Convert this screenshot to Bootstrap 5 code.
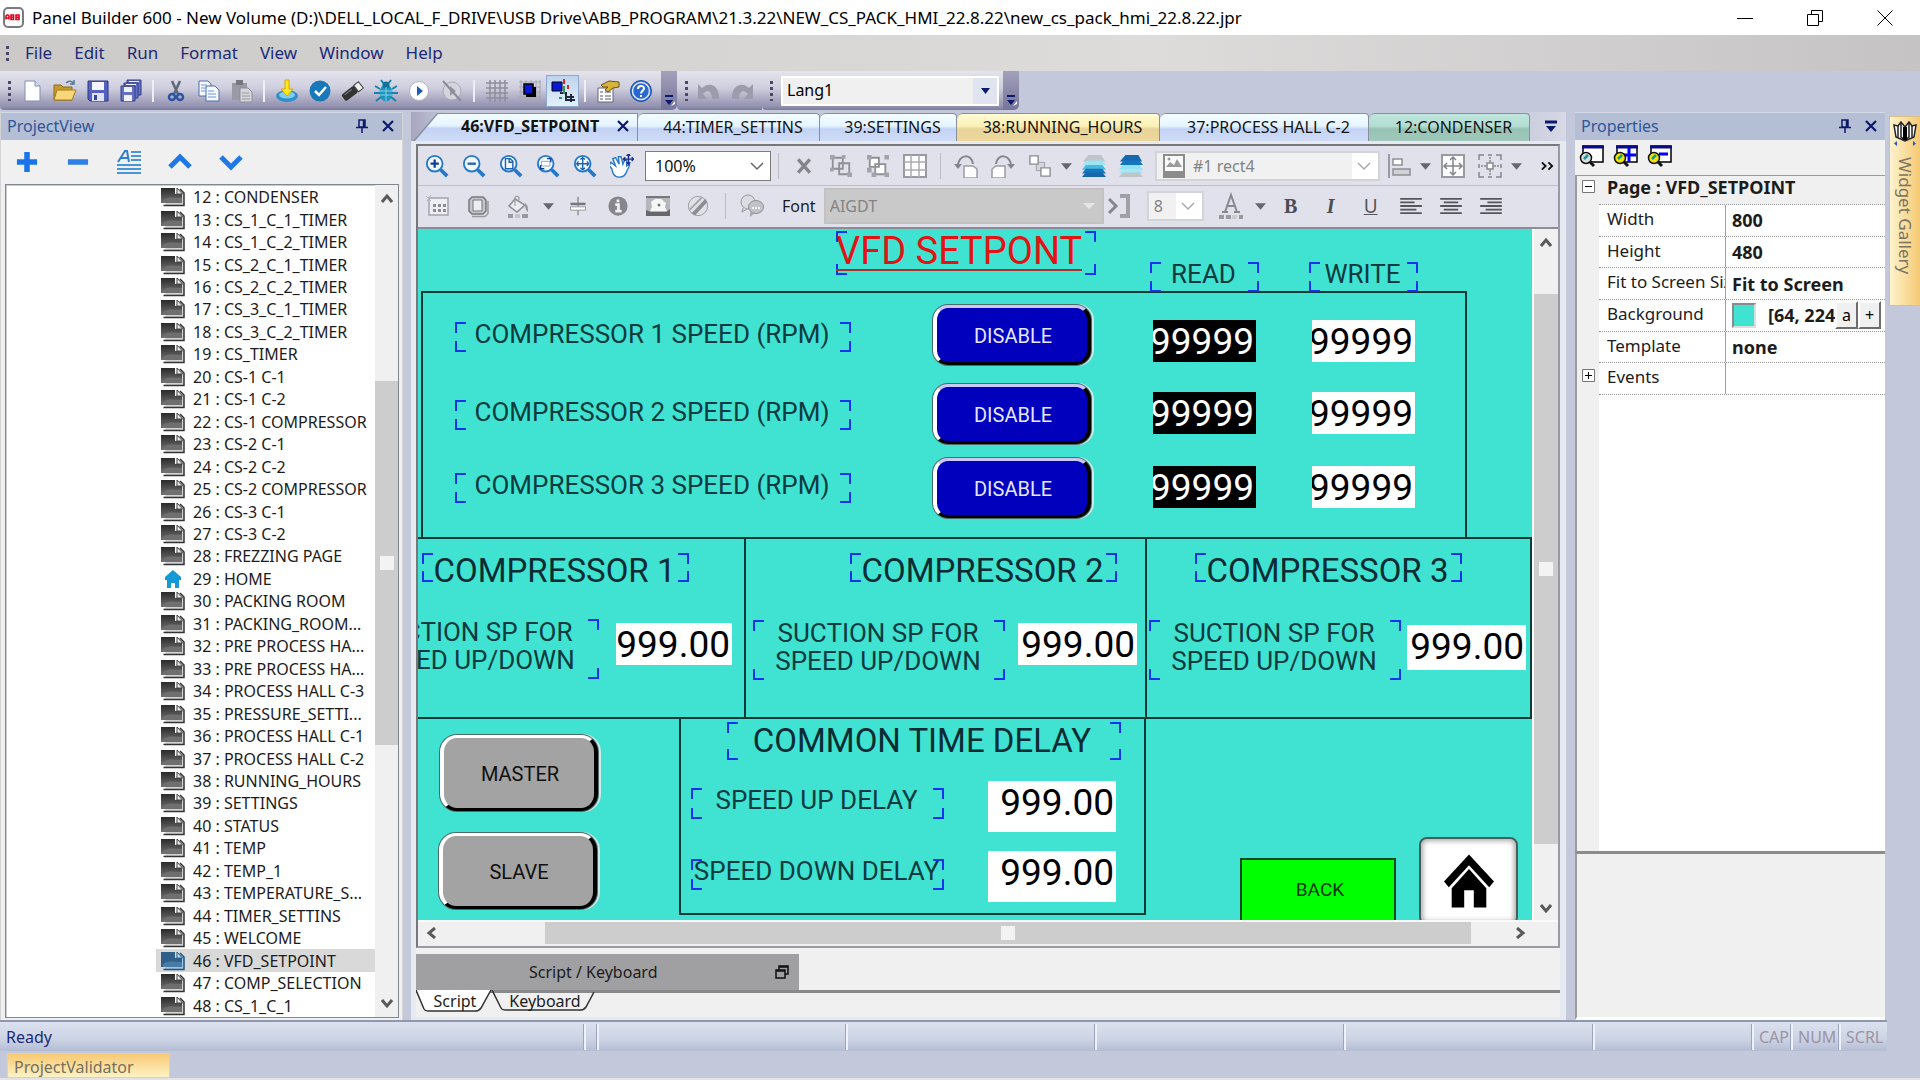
<!DOCTYPE html>
<html lang="en">
<head>
<meta charset="utf-8">
<meta name="viewport" content="width=device-width, initial-scale=1">
<title>Panel Builder 600</title>
<link href="https://cdn.jsdelivr.net/npm/bootstrap@5.3.0/dist/css/bootstrap.min.css" rel="stylesheet">
<style>
:root{--ui:"Noto Sans","Open Sans",sans-serif;--hmi:Roboto,"Liberation Sans",sans-serif;--chrome:#c3c9da;--navy:#1b2a78;--teal:#40e2d1}
body{font-family:var(--ui);font-size:16px;line-height:20px;background:var(--chrome);color:#1c1c1c}
svg{display:block;flex:none}
.ico{width:24px;height:24px}
button{font-family:inherit}
.plain{background:none;border:0;padding:0;border-radius:0;color:inherit;display:flex;align-items:center;justify-content:center;flex:none}
.grow0{flex:1 1 0;min-width:0;min-height:0}
/* title bar */
.titlebar{height:35px;background:#fff;color:#000;font-size:17px;padding-left:3px;flex:none}
.wbtn{width:70px;height:35px}
.menubar{height:36px;padding-left:6px;gap:22px;background:linear-gradient(90deg,#cbcac9,#dedcdb 60%,#c5c3c4);flex:none}
.menubar a{color:var(--navy);text-decoration:none;font-size:17px}
.grip{width:3px;height:20px;background:repeating-linear-gradient(#4a4a66 0 3px,transparent 3px 6px);flex:none}
.menubar .grip{height:15px;margin-right:-6px}
/* main tool strip */
.strip{height:41px;flex:none}
.tbar{height:39px;background:linear-gradient(#e4e4ee,#cdcddd 45%,#918fae 92%,#7d7b9b);border-radius:0 0 0 4px}
.tbar .plain{width:33px;height:32px}
.tbar .pressed{background:linear-gradient(#bcd3ee,#e4f0fc);box-shadow:inset 0 0 0 1px #8fa9cc}
.vsep{width:12px;height:22px;flex:none;background:linear-gradient(#eeeef6,#eeeef6) center/2px 100% no-repeat}
.cap{width:16px;height:39px;background:linear-gradient(#a3a1ba,#76749a);border-radius:0 0 5px 0;padding-bottom:3px;flex:none}
.langsel{width:218px;height:30px;border-radius:0;border:2px solid #fff;font-size:16px;padding:0 28px 2px 4px;color:#000;line-height:20px;
 background:#f0f0f0 url("data:image/svg+xml,%3Csvg xmlns='http://www.w3.org/2000/svg' width='24' height='26'%3E%3Cpath fill='%23e0e4f1' d='M0 0h24v26H0z'/%3E%3Cpath fill='%230d1a6b' d='M8 10h9l-4.500 6z'/%3E%3C/svg%3E") right center/24px 26px no-repeat}
/* dock panels */
.phead{height:28px;background:#b4bed5;color:#2f5699;font-size:16px;padding:0 7px 2px 6px;border-top:1px solid #d3d9e8;flex:none}
.project{width:403px;background:#f0f0f0;flex:none;border-left:1px solid #d4d4d4;border-right:1px solid #d4d4d4;padding-bottom:2px}
.ptools{height:44px;flex:none}
.ptools .plain{width:51px;height:44px}
.treebox{margin:0 3px 0 4px;border:1px solid #828790;box-shadow:inset 1px 1px 0 #c9cbd0;background:#fff}
.tree{padding:1px 0 0 150px;margin:0;list-style:none;min-width:0;font-size:16px}
.tree li{flex:1 1 0;min-height:0;padding-left:5px;gap:8px}
.tree li.cur{background:#d9d9d9}
.vbar{width:23px;background:#f0f0f0;flex:none;padding:8px 0}
.vthumb{background:#cdcdcd}
.nub{width:14px;height:14px;background:#f3f3f3}
/* editor */
.tabs{height:29px;padding-left:2px;background:linear-gradient(90deg,#a7a5bf,#c3c9da 3%,#c3c9da 95%,#d8d8e6);flex:none}
.tabs .plain{height:28px;font-size:16px;padding:0 0 2px 9px;color:#141414;background:linear-gradient(#f3fdff,#e6f4ff 45%,#c2d3f4 55%,#cfdcf7);border:1px solid #8a8f9f;border-width:1px 1px 0 0;border-radius:6px 4px 0 0}
.tabs .first{width:225px;font-weight:700;border:0;border-radius:0;background:#8a8f9f;clip-path:polygon(0 100%,24px 0,100% 0,100% 100%);padding-left:48px;justify-content:flex-start;position:relative;gap:17px;z-index:0}
.tabs .first::before{content:"";position:absolute;inset:0;z-index:-1;background:linear-gradient(#f3fdff,#e6f4ff 45%,#c2d3f4 55%,#cfdcf7);clip-path:polygon(2px 100%,25px 1px,224px 1px,224px 100%)}
.tabs .w2{width:182px}.tabs .w3{width:137px}.tabs .w4{width:203px}.tabs .w5{width:209px}.tabs .w6{width:161px}
.tabs .amber{background:linear-gradient(#fefbd5,#fbf0b4 45%,#e8d49a 55%,#ecd69c)}
.tabs .mint{background:linear-gradient(#bfe6dd,#b4ddd2 45%,#97c3b4 55%,#a0c8bb)}
.frame{border:1px solid #e7e9f0;border-width:3px 6px 3px 5px;background:#f0f0f0}
.sheet{border:2px solid #77777c;border-right-color:#9a9aa6;border-bottom-color:#9a9aa6}
.ebar{background:#e1e1eb;flex:none}
.e1{height:40px;border-bottom:1px solid #bdbdc9}.e1 .plain{width:37px;height:34px}
.e2{height:43px;border-bottom:2px solid #8d8d98;padding-bottom:2px}.e2 .plain{width:40px;height:34px}
.ebar .plain.caret{width:17px}.e2 .plain.caret{width:20px}.e2 .plain.brkt{width:33px}
.esep{width:14px;height:26px;flex:none;background:linear-gradient(#bcbcc8,#bcbcc8) center/1px 100% no-repeat}
.serif{font-family:"Liberation Serif",serif;font-size:20px;font-weight:700;color:#4c4c52}
.uline{font-size:19px;color:#55555b;text-decoration:underline}
.combo{border-radius:0;border:1px solid #7c7c7c;height:30px;padding:0 24px 0 9px;font-size:16px;line-height:20px;flex:none;color:#111;
 background:#fff url("data:image/svg+xml,%3Csvg xmlns='http://www.w3.org/2000/svg' width='14' height='10'%3E%3Cpath fill='none' stroke='%23666' stroke-width='1.500' d='M1 2l6 6 6-6'/%3E%3C/svg%3E") right 6px center/14px 10px no-repeat}
.combo.dim{color:#838383;border:2px solid #d3d3da;background-color:#f1f1f1;background-image:url("data:image/svg+xml,%3Csvg xmlns='http://www.w3.org/2000/svg' width='26' height='28'%3E%3Cpath fill='%23fff' d='M0 0h26v28H0z'/%3E%3Cpath fill='none' stroke='%23aaa' stroke-width='1.500' d='M6 11l6 6 6-6'/%3E%3C/svg%3E");background-size:26px 28px;background-position:right 0 center}
.combo.zoomsel{width:126px;margin-left:5px}.combo.objsel{width:225px;margin-left:6px;padding-left:36px}.combo.sizesel{width:57px;margin-left:10px;margin-right:7px;padding-left:5px;padding-right:20px}
.combo.fontsel{width:280px;height:36px;border-color:#c2c2c2;background-color:#c9c9c9;padding-left:4px;background-size:14px 10px;background-position:right 6px center;
 background-image:url("data:image/svg+xml,%3Csvg xmlns='http://www.w3.org/2000/svg' width='14' height='10'%3E%3Cpath fill='%23e6e6e6' d='M1 2h12l-6 6z'/%3E%3C/svg%3E")}
.flab{margin:0 8px 0 6px}
.objwrap{position:relative}.objwrap svg{position:absolute;left:13px;top:3px}
.stage{position:relative;overflow:hidden;background:var(--teal);font-family:var(--hmi);color:#0e3b40}
.evbar{width:26px;background:#f0f0f0;border-left:2px solid #fafafa;flex:none;padding:8px 0 6px}
.ehbar{height:26px;background:#f0f0f0;border-top:2px solid #fafafa;flex:none;padding:0 32px 2px 8px}
/* shapes placed on the HMI page */
.stage>*{position:absolute}
.box{border:2px solid #083a38}
.tagl{--c:#1533ee;--h:11px;display:flex;align-items:center;justify-content:center;text-align:center;white-space:nowrap;font-size:26px;line-height:28px;padding:0 2px 6px 0;
 background:
 linear-gradient(var(--c),var(--c)) 0 0/11px 2px,linear-gradient(var(--c),var(--c)) 0 0/2px var(--h),
 linear-gradient(var(--c),var(--c)) 100% 0/11px 2px,linear-gradient(var(--c),var(--c)) 100% 0/2px var(--h),
 linear-gradient(var(--c),var(--c)) 0 100%/11px 2px,linear-gradient(var(--c),var(--c)) 0 100%/2px var(--h),
 linear-gradient(var(--c),var(--c)) 100% 100%/11px 2px,linear-gradient(var(--c),var(--c)) 100% 100%/2px var(--h);background-repeat:no-repeat}
.tagl.big{font-size:33px;color:#0b2c33;padding:6px 2px 0 0}
.tagl.title{font-size:38px;color:#e01414;padding:0 14px 2px 0;justify-content:flex-start}
.tagl.title span{border-bottom:2px solid #a8322e;line-height:36px}
.num{overflow:hidden;display:flex;justify-content:flex-end;background:#fff}
.num input{width:130px;flex:none;border:0;padding:0 2px 0 0;background:none;text-align:right;font:37px/44px var(--hmi);color:#000;height:44px}
.num.blk{background:#000}.num.blk input{color:#fff}
.key{border:4px solid;border-color:#c9c9f4 #000 #000 #fff;border-top-width:3px;border-bottom-width:3px;border-radius:15px;box-shadow:0 0 0 1px #4c6a6c,2px 0 0 1px #cfe9e6;background:#0000bd;color:#e6e6ff;font-family:var(--hmi);font-size:20px;line-height:22px;padding:2px 0 0 2px;width:158px;height:60px}
.key.grey{background:#a3a3a3;color:#101010;border-top-color:#fff;height:76px;border-radius:17px}
.key.go{background:#0f0;color:#063306;border:2px solid #0a4a20;border-radius:0;box-shadow:none;width:156px;height:64px;font-size:19px;padding:0 0 0 4px}
.key.home{background:#fff;border:2px solid #4a5c5c;border-radius:8px;box-shadow:inset 0 0 5px 2px #aaa;width:99px;height:88px;padding:0}
#tTitle{left:418px;top:2px;width:260px;height:44px}
#tRead{left:732px;top:33px;width:109px;height:30px}#tWrite{left:891px;top:33px;width:109px;height:30px}
#bTop{left:3px;top:62px;width:1046px;height:248px}
#bC1{left:-60px;top:308px;width:388px;height:182px}#bC2{left:326px;top:308px;width:403px;height:182px}#bC3{left:727px;top:308px;width:387px;height:182px}#bDelay{left:261px;top:488px;width:467px;height:198px}
.rowlab{left:37px;width:396px;height:30px}.r1{top:93px}.r2{top:171px}.r3{top:244px}
.kd{left:515px}.k1{top:76px}.k2{top:155px}.k3{top:229px}
.nr{left:735px;width:103px;height:42px}.nw{left:894px;width:103px;height:42px}.n1{top:91px}.n2{top:163px}.n3{top:237px}
.cap1{left:4px}.cap2{left:432px}.cap3{left:777px}.ct{top:324px;width:267px;height:29px}
.sx{width:252px;height:60px}.s1{left:-71px;top:390px}.s2{left:335px;top:391px}.s3{left:731px;top:391px}
.v1{left:198px;top:394px;width:116px;height:42px}.v2{left:600px;top:394px;width:119px;height:42px}.v3{left:989px;top:396px;width:119px;height:45px}
#tDelay{left:309px;top:493px;width:394px;height:38px;padding:0 4px 1px 0}
.dl{left:273px;width:253px;height:31px;padding-bottom:7px}.d1{top:559px}.d2{top:630px}
.dv{left:570px;width:128px;height:51px}.d1v{top:552px}.d2v{top:622px}
#kM{left:22px;top:506px}#kS{left:21px;top:604px}#kB{left:822px;top:629px}#kH{left:1001px;top:608px}
/* script drawer */
.drawer{height:36px;width:383px;background:#a09fa2;margin-top:6px;padding:0 10px 0 113px;flex:none}
.sheets{height:27px;border-top:3px solid #89888a;flex:none}
.sheets .plain{height:22px;margin-top:-3px;padding-left:2px;position:relative;z-index:0}
.sheets .t1{width:76px}.sheets .t2{width:104px}
.sheets svg{position:absolute;inset:0;width:100%;height:100%;z-index:-1}
/* properties */
.props{width:310px;margin-left:9px;background:#f0f0f0;flex:none}
.qtools{height:35px;padding-bottom:4px;flex:none}.qtools .plain{width:34px;height:30px}
.grid{border-top:1px solid #9b9b9b;border-left:2px solid #9b9b9b;font-size:17px;line-height:20px}
.gut{width:22px;flex:none;background:#f0f0f0;gap:176px;padding-top:4px}
.gcell{border-bottom:1px dotted #9a9a9a;white-space:nowrap;overflow:hidden}
.gtitle{height:29px;background:#f0f0f0;font-weight:700;font-size:18px;padding:1px 0 0 8px}
.grows{height:190px}.grows .gcell{flex:1 1 0;display:flex}
.gk{width:127px;padding:0 0 3px 8px;border-right:1px solid #a0a0a0;flex:none;display:flex;align-items:center;overflow:hidden}
.gv{font-weight:700;font-size:18px;padding-left:6px;min-width:0;display:flex;align-items:center;flex:1 1 0;overflow:hidden}
.swatch{width:24px;height:25px;background:var(--teal);border:2px solid #8a8a8a;border-right-color:#ddd;border-bottom-color:#ddd;flex:none}
.gbtn{width:23px;height:28px;background:#f0f0f0;border:2px solid;border-color:#fff #6d6d6d #6d6d6d #fff;padding:0;line-height:18px;font-size:16px;flex:none}
.desc{height:169px;border-top:3px solid #8c8c8c;border-left:2px solid #9b9b9b;border-bottom:3px solid #fff;flex:none}
.rail{width:35px;flex:none;padding:4px 0 0 4px}
.rail .plain{width:31px;height:190px;background:linear-gradient(90deg,#fdf3cd,#f6c973);border:1px solid #d8c189;border-right:0;flex-direction:column;justify-content:flex-start;gap:10px;color:#79735f;padding-top:4px}
.rail span{writing-mode:vertical-rl;font-size:17px}
/* status */
.status{height:31px;border-top:2px solid #8f98b0;background:linear-gradient(#dbe1ee,#ccd3e4 60%,#b4bdd4);color:var(--navy);margin-right:33px;padding-left:6px;flex:none}
.status span+span{border-left:2px solid #eef1f8;box-shadow:-1px 0 0 #9aa5c0;padding-left:5px;height:26px;color:#9c93a4;display:flex;align-items:center;flex:none;width:249px}
.status span+span.sa{width:13px}.status span+span.sb{width:159px}.status span+span.sc{width:39px}.status span+span.sd{width:48px}
.dock{height:29px;padding:2px 0 0 7px;border-bottom:2px solid #e3e3e6;flex:none}
.dock .plain{width:163px;height:25px;background:linear-gradient(#f8c973,#fdf2c4);border:1px solid #e3d3a0;color:#77705c;justify-content:flex-start;padding:2px 0 0 6px}
</style>
</head>
<body class="vh-100 d-flex flex-column overflow-hidden">

<svg width="0" height="0" class="position-absolute" aria-hidden="true">
<defs>
<linearGradient id="gd" x1="0" y1="0" x2="0" y2="1"><stop offset="0" stop-color="#2a2a2a"/><stop offset="1" stop-color="#707070"/></linearGradient>
<symbol id="page" viewBox="0 0 24 20"><path d="M2.500 18.500H23V6l-4-4" fill="#d2d2d2" stroke="#333" stroke-width="1.500"/><path d="M0 1h14v6h7v9H0z" fill="url(#gd)"/><path d="M2 13c6-4 12-2 19-2v5H2z" fill="#6f6f6f"/><path d="M16 1l5.500 6H16z" fill="#eee" stroke="#444"/></symbol>
<symbol id="page-b" viewBox="0 0 24 20"><path d="M2.500 18.500H23V6l-4-4" fill="#9ec4e4" stroke="#1d5480" stroke-width="1.500"/><path d="M0 1h14v6h7v9H0z" fill="#2d5f8a"/><path d="M2 13c6-4 12-2 19-2v5H2z" fill="#4a7ba5"/><path d="M16 1l5.500 6H16z" fill="#bcd9f1" stroke="#22618f"/></symbol>
<symbol id="home" viewBox="0 0 24 20"><path d="M12 1l8 7v3h-2v8h-4v-5h-4v5H6v-8H4V8z" fill="#129ad6"/></symbol>
<symbol id="new" viewBox="0 0 24 24"><path d="M5 2h10l5 5v15H5z" fill="#fff" stroke="#7f8fb5"/><path d="M15 2v5h5" fill="#d8e0f0" stroke="#7f8fb5"/></symbol>
<symbol id="open" viewBox="0 0 24 24"><path d="M1 6h7l2 2h9v13H1z" fill="#c79a2c" stroke="#8f6a14"/><path d="M4 11h19l-4 10H1z" fill="#f6d779" stroke="#a37b1c"/><path d="M13 4c3-3 6-2 8 1M21 1v4h-4" stroke="#56799a" stroke-width="1.500" fill="none"/></symbol>
<symbol id="save" viewBox="0 0 24 24"><path d="M2 2h20v20H4l-2-2z" fill="#5561be" stroke="#2c357f"/><path d="M6 3h12v8H6z" fill="#f4f5fc"/><path d="M6 14h12v8H6z" fill="#dfe2f4"/><path d="M8 16h3v5H8z" fill="#39459d"/></symbol>
<symbol id="saveall" viewBox="0 0 24 24"><g fill="#6470c2" stroke="#333c88"><path d="M8 1h14v15H8z"/><path d="M5 4h14v15H5z"/><path d="M2 7h14v15H2z"/></g><path d="M10 2h10v1H10zM7 5h10v1H7zM5 8h8v5H5zM5 16h8v6H5z" fill="#f0f1fb"/></symbol>
<symbol id="cut" viewBox="0 0 24 24"><path d="M8 2l6 13M16 2l-6 13" stroke="#5f6678" stroke-width="2.500"/><g fill="none" stroke="#2b54a3" stroke-width="2.500"><circle cx="8" cy="18" r="3"/><circle cx="16" cy="18" r="3"/></g></symbol>
<symbol id="copy" viewBox="0 0 24 24"><g fill="#f5f9ff" stroke="#4a6eb0"><path d="M2 2h9l3 3v12H2z"/><path d="M9 7h9l4 4v11H9z"/></g><path d="M4 6h6M4 9h5M4 12h5M11 12h6M11 15h8M11 18h8" stroke="#6d9ad8"/></symbol>
<symbol id="paste" viewBox="0 0 24 24"><path d="M2 4h15v17H2z" fill="#9a9aa6"/><path d="M6 1h7v5H6z" fill="#77777f"/><path d="M10 9h8l4 4v10H10z" fill="#d5d5dc" stroke="#8c8c97"/><path d="M12 14h7M12 17h8M12 20h8" stroke="#98989f"/></symbol>
<symbol id="down" viewBox="0 0 24 24"><ellipse cx="12" cy="17" rx="11" ry="6" fill="#2f8fc9"/><ellipse cx="12" cy="16" rx="8" ry="3.500" fill="#7fcdf0"/><path d="M10 1h4v9h4l-6 7-6-7h4z" fill="#ffe81c" stroke="#d8a800"/></symbol>
<symbol id="ok" viewBox="0 0 24 24"><circle cx="12" cy="12" r="10.500" fill="#1878b8"/><path d="M7 12l4 4 7-8" stroke="#fff" stroke-width="2.500" fill="none"/></symbol>
<symbol id="usb" viewBox="0 0 24 24"><g transform="rotate(-38 12 12)"><rect x="0" y="8" width="16" height="8" rx="2" fill="#333"/><path d="M16 8h6v8h-6z" fill="#eee" stroke="#444"/><path d="M3 10h9" stroke="#888"/></g></symbol>
<symbol id="bug" viewBox="0 0 24 24"><path d="M7 1l3 4M17 1l-3 4M1 7l5 3M23 7l-5 3M0 14h6M24 14h-6M2 22l5-4M22 22l-5-4" stroke="#1583ab" stroke-width="2"/><ellipse cx="12" cy="14" rx="6.500" ry="8.500" fill="#1d94bd"/><circle cx="12" cy="6" r="3.500" fill="#137198"/><path d="M12 8v14M6 12h12M6 16h12" stroke="#8bd2e8"/></symbol>
<symbol id="play" viewBox="0 0 24 24"><circle cx="12" cy="12" r="9.500" fill="#fdfdff" stroke="#b4b4c2"/><path d="M10 7l6 5-6 5z" fill="#1c5cb8"/></symbol>
<symbol id="stop" viewBox="0 0 24 24"><circle cx="12" cy="12" r="9" fill="#d4d4dc" stroke="#a9a9b5"/><path d="M10 7l6 5-6 5z" fill="#9a9aa6"/><path d="M3 2l18 20" stroke="#8b8b97" stroke-width="2"/></symbol>
<symbol id="grid9" viewBox="0 0 24 24"><path d="M5 1v22M10 1v22M15 1v22M20 1v22M1 4h22M1 9h22M1 14h22M1 19h22" stroke="#8e8e9c" stroke-width="1.500"/></symbol>
<symbol id="snap" viewBox="0 0 24 24"><path d="M3 1v22M8 1v22M13 1v22M18 1v22M22 1v22M1 3h22M1 8h22M1 13h22M1 18h22M1 22h22" stroke="#a5a5b3"/><path d="M8 8h10v10H8z" fill="#000"/><path d="M6 5h9v10H6z" fill="#0a18d8" stroke="#000" stroke-width="1.500"/></symbol>
<symbol id="guide" viewBox="0 0 24 24"><path d="M1 3h10v9H1z" fill="#0a18d8" stroke="#000"/><path d="M9 14h6v7h9M15 18h8M20 15v8" stroke="#1c2a3a" stroke-width="2" fill="none"/><path d="M13 0v5M17 6v4" stroke="#d22" stroke-width="2"/><path d="M13 7v8M8 19h3" stroke="#2a9a5a" stroke-width="2"/></symbol>
<symbol id="propsico" viewBox="0 0 24 24"><path d="M2 9h15v14H2z" fill="#fff" stroke="#667"/><path d="M4 13h3M9 13h6M4 17h3M9 17h6M4 20h3M9 20h6" stroke="#557"/><path d="M5 6l8-4 10 1v5l-6 1-5 4-3-2 3-3H7z" fill="#d8b33a" stroke="#6b5310"/></symbol>
<symbol id="help" viewBox="0 0 24 24"><circle cx="12" cy="12" r="10.500" fill="#2a68cf" stroke="#1f4fa8"/><circle cx="12" cy="12" r="8.500" fill="none" stroke="#dfe9fa" stroke-width="1.500"/><path d="M9 10c0-4 6-4 6-.500 0 2-3 2.500-3 5M12 16v2" stroke="#fff" stroke-width="2" fill="none"/></symbol>
<symbol id="undo" viewBox="0 0 24 24"><path d="M1 5v15h9l-4-5c4-5 9-3 9 5h7C23 6 12 2 5 9z" fill="#9c9cac"/></symbol>
<symbol id="more" viewBox="0 0 12 12"><path d="M2 1h8" stroke="#0d1a6b" stroke-width="2"/><path d="M2 5h8l-4 5z" fill="#0d1a6b"/><path d="M8 11l4-5v3z" fill="#fff"/></symbol>
<symbol id="pin" viewBox="0 0 14 14"><path d="M4 1h6v7H4zM8.500 1v7M1 8.500h12M7 9v5" fill="none" stroke="#0d1a6b" stroke-width="1.500"/></symbol>
<symbol id="x" viewBox="0 0 14 14"><path d="M2 2l10 10M12 2L2 12" stroke="#0d1a6b" stroke-width="2.200"/></symbol>
<symbol id="plus" viewBox="0 0 24 24"><path d="M12 1v22M1 12h22" stroke="#1a73e8" stroke-width="6"/></symbol>
<symbol id="minus" viewBox="0 0 24 24"><path d="M1 12h22" stroke="#2f80e6" stroke-width="6"/></symbol>
<symbol id="alist" viewBox="0 0 24 24"><path d="M14 2h10M14 6h10M14 10h10M0 15h24M0 19h24M0 23h24" stroke="#4a95d8" stroke-width="2"/><path d="M1 12L8 1h2l2 11M4 8h7" stroke="#2f80d0" stroke-width="2" fill="none"/></symbol>
<symbol id="cup" viewBox="0 0 24 24"><path d="M2 17L12 7l10 10" stroke="#1f78e6" stroke-width="5" fill="none"/></symbol>
<symbol id="cdn" viewBox="0 0 24 24"><path d="M2 7l10 10L22 7" stroke="#1f78e6" stroke-width="5" fill="none"/></symbol>
<symbol id="mag" viewBox="0 0 26 26"><circle cx="10.500" cy="10.500" r="8.500" fill="#f2f8ff" stroke="#2478c8" stroke-width="2"/><path d="M17 17l7 7" stroke="#2478c8" stroke-width="4"/></symbol>
<symbol id="z1" viewBox="0 0 26 26"><use href="#mag"/><path d="M10.500 6v9M6 10.500h9" stroke="#103f9a" stroke-width="2.500"/></symbol>
<symbol id="z2" viewBox="0 0 26 26"><use href="#mag"/><path d="M6 10.500h9" stroke="#2060b0" stroke-width="2.500"/></symbol>
<symbol id="z3" viewBox="0 0 26 26"><use href="#mag"/><path d="M7 5h5l3 3v8H7zM11 5v4h4" fill="none" stroke="#2060b0" stroke-width="1.500"/></symbol>
<symbol id="z4" viewBox="0 0 26 26"><use href="#mag"/><path d="M6 8h9v5H6z" fill="#fff" stroke="#8aa"/><path d="M12 5h4v4M5 12v4h4" fill="none" stroke="#103f9a" stroke-width="1.500"/></symbol>
<symbol id="z5" viewBox="0 0 26 26"><use href="#mag"/><path d="M10.500 4v13M4 10.500h13M8 6l2.500-2L13 6M8 15l2.500 2 2.500-2M6 8l-2 2.500L6 13M15 8l2 2.500-2 2.500" fill="none" stroke="#2060b0" stroke-width="1.500"/></symbol>
<symbol id="hand" viewBox="0 0 26 26"><path d="M1 9l5 4-3-8 3-1 4 7-1-8h3l2 8 2-5 2 1v6l3-2c1 2-2 5-3 8-1 4-4 6-8 6-4 0-6-2-7-5l-1-4-3-4z" fill="#fff" stroke="#2478c8" stroke-width="1.500"/><path d="M20 0v11M14.500 5.500h11M18 2l2-2 2 2M18 9l2 2 2-2M16.500 3.500l-2 2 2 2M23.500 3.500l2 2-2 2" stroke="#1b2f8f" stroke-width="1.500" fill="none"/></symbol>
<symbol id="del" viewBox="0 0 24 24"><path d="M5 4l14 16M19 4L5 20" stroke="#84848c" stroke-width="4"/></symbol>
<symbol id="grp" viewBox="0 0 24 24"><g fill="none" stroke="#8f8f97" stroke-width="2"><path d="M3 3h11v12H3zM10 9h11v12H10z"/></g><path d="M0 0h5v5H0zM19 19h5v5h-5zM0 14h4v4H0zM13 0h4v4h-4z" fill="#a3a3ab"/></symbol>
<symbol id="ungrp" viewBox="0 0 24 24"><g fill="#fff" stroke="#8f8f97" stroke-width="2"><path d="M3 3h10v10H3zM9 10h11v11H9z"/></g><path d="M0 0h5v5H0zM19 0h5v5h-5zM0 14h5v5H0zM19 19h5v5h-5zM5 19h5v5H5z" fill="#a3a3ab"/></symbol>
<symbol id="tbl" viewBox="0 0 24 24"><path d="M1 1h22v22H1z" fill="#fdfdfd" stroke="#9a9aa2" stroke-width="2"/><path d="M8 1v22M16 1v22M1 8h22M1 16h22" stroke="#aaaab2" stroke-width="1.500"/></symbol>
<symbol id="rotl" viewBox="0 0 24 24"><path d="M10 12h9l4 3v9H10z" fill="#fdfdfd" stroke="#9a9aa2" stroke-width="1.500"/><path d="M4 12C4 0 18-1 19 10" fill="none" stroke="#85858d" stroke-width="2"/><path d="M0 10h8l-4 5z" fill="#85858d"/></symbol>
<symbol id="order" viewBox="0 0 24 24"><path d="M8 8h9v9H8z" fill="#d5d5db" stroke="#9a9aa2"/><path d="M1 1h9v9H1zM13 14h10v9H13z" fill="#fff" stroke="#8a8a92" stroke-width="1.500"/></symbol>
<symbol id="lay1" viewBox="0 0 26 26"><path d="M7 1h14l4 7H1z" fill="#bfc4c9"/><path d="M5 7h17l4 5H1z" fill="#9be6f2"/><path d="M4 12h18l4 5H0z" fill="#49b9e0"/><path d="M4 16h18l4 5H0z" fill="#1576bd"/><path d="M4 20h18l4 5H0z" fill="#1568ad"/></symbol>
<symbol id="lay2" viewBox="0 0 26 26"><path d="M7 1h14l4 7H1z" fill="#1568ad"/><path d="M5 7h17l4 5H1z" fill="#1576bd"/><path d="M4 12h18l4 5H0z" fill="#8fe2f4"/><path d="M4 16h18l4 5H0z" fill="#9fe8f4"/><path d="M4 20h18l4 5H0z" fill="#bfc4c9"/></symbol>
<symbol id="pic" viewBox="0 0 24 24"><path d="M2 1h20v22H2z" fill="#fafafa" stroke="#8c8c8c" stroke-width="2"/><path d="M2 17h20v6H2z" fill="#8c8c8c"/><path d="M4 13l4-5 4 3 3-6 5 8z" fill="#9a9a9a"/><circle cx="7" cy="5" r="1.500" fill="#9a9a9a"/></symbol>
<symbol id="alg" viewBox="0 0 24 24"><path d="M2 0v24" stroke="#9a9aa2" stroke-width="2"/><path d="M6 5h9v6H6z" fill="#fff" stroke="#8f8f97" stroke-width="1.500"/><path d="M6 15h17v6H6z" fill="#d0d0d6" stroke="#8f8f97" stroke-width="1.500"/></symbol>
<symbol id="fit" viewBox="0 0 24 24"><path d="M1 1h22v22H1z" fill="#fdfdfd" stroke="#9a9aa2" stroke-width="2"/><path d="M12 4v16M4 12h16M9 6l3-3 3 3M9 18l3 3 3-3M6 9l-3 3 3 3M18 9l3 3-3 3" fill="none" stroke="#85858d" stroke-width="1.500"/></symbol>
<symbol id="dist" viewBox="0 0 24 24"><path d="M1 6V1h5M10 1h4M18 1h5v5M23 10v4M23 18v5h-5M14 23h-4M6 23H1v-5M1 14v-4" fill="none" stroke="#85858d" stroke-width="1.500"/><path d="M9 9h6v6H9z" fill="#fff" stroke="#85858d" stroke-width="1.500"/><path d="M12 3v5M12 16v5M3 12h5M16 12h5" stroke="#85858d" stroke-width="1.500" stroke-dasharray="2 1"/></symbol>
<symbol id="tri" viewBox="0 0 12 8"><path d="M0 1h12L6 8z" fill="#66666e"/></symbol>
<symbol id="chev" viewBox="0 0 14 12"><path d="M1 2l4 4-4 4M8 2l4 4-4 4" fill="none" stroke="#111" stroke-width="2"/></symbol>
<symbol id="f1" viewBox="0 0 24 24"><path d="M3 4h19v17H3z" fill="#efeff3" stroke="#a4a4ac" stroke-width="1.500"/><path d="M0 2l5 5M5 1L1 7" stroke="#b5b5bd"/><path d="M7 10h3v3H7zM12 10h3v3h-3zM17 10h3v3h-3zM7 15h3v3H7zM12 15h3v3h-3zM17 15h3v3h-3z" fill="#8d8d95"/></symbol>
<symbol id="f2" viewBox="0 0 24 24"><path d="M6 3h11l3 3v11l-3 3H6l-3-3V6z" fill="#c4c4ca" stroke="#77777f" stroke-width="1.500"/><path d="M7 6h9v11H7z" fill="#ececf2" stroke="#77777f"/><path d="M6 22.500h13l3-3V7" stroke="#99999f" fill="none" stroke-width="1.500"/></symbol>
<symbol id="f3" viewBox="0 0 24 24"><path d="M9 5l10 6-8 7-8-6z" fill="#ececf0" stroke="#8d8d95" stroke-width="1.500"/><path d="M9 12V3a3 3 0 0 1 4 0v3" fill="none" stroke="#8d8d95"/><path d="M19 9c4 3 3 6 3 9-2-1-3-4-3-9z" fill="#9a9aa2"/><path d="M2 20h5v4H2zM16 20h6v4h-6z" fill="#9a9aa2"/><path d="M9 20h5v4H9z" fill="#c4c4ca"/></symbol>
<symbol id="f4" viewBox="0 0 24 24"><path d="M12 1v22" stroke="#9a9aa2" stroke-width="2"/><path d="M3 8h18v3H3z" fill="#77777f"/><path d="M3 13h18v4H3z" fill="#fff" stroke="#88888f"/></symbol>
<symbol id="f5" viewBox="0 0 24 24"><circle cx="12" cy="12" r="10.500" fill="#85858b"/><path d="M12 5v3M9 10.500h3.500V17M9 17.500h7" stroke="#f0f0f4" stroke-width="3" fill="none"/></symbol>
<symbol id="f6" viewBox="0 0 24 24"><path d="M0 2h24v20H0z" fill="#b5b5ba"/><path d="M0 2h24v2H0z" fill="#77777c"/><path d="M5 8l4-3 6 0 5 4-1 4 2 4H4l2-4z" fill="#f6f6f8"/><circle cx="13" cy="11" r="1.500" fill="#777"/><path d="M0 22v-6l5 2h15l4-3v7z" fill="#66666b"/></symbol>
<symbol id="f7" viewBox="0 0 24 24"><circle cx="12" cy="12" r="10.500" fill="#e0e0e5" stroke="#96969c"/><path d="M5 20L20 4l2 4L9 22z" fill="#8d8d95"/><path d="M3 16L16 3" stroke="#a4a4ac" stroke-width="2"/></symbol>
<symbol id="f8" viewBox="0 0 24 24"><circle cx="8" cy="8" r="7" fill="#dcdce2" stroke="#96969c"/><path d="M3 14l-1 4 5-3" fill="#dcdce2" stroke="#96969c"/><ellipse cx="16" cy="13" rx="7.500" ry="6.500" fill="#c2c2c8" stroke="#8d8d95"/><path d="M10 18l0 5 5-4" fill="#a9a9b0"/><path d="M12 14h2M15 14h2M18 14h2" stroke="#fff" stroke-width="1.500"/></symbol>
<symbol id="brk" viewBox="0 0 24 24"><path d="M1 5l7 7-7 7" stroke="#85858d" stroke-width="3" fill="none"/><path d="M12 2h8v20h-8" stroke="#a0a0a6" stroke-width="4" fill="none"/></symbol>
<symbol id="al" viewBox="0 0 24 20"><path d="M0 2h24M0 6h16M0 10h24M0 14h18M0 18h24" stroke="#55555b" stroke-width="2"/></symbol>
<symbol id="ac" viewBox="0 0 24 20"><path d="M0 2h24M4 6h16M0 10h24M4 14h16M0 18h24" stroke="#55555b" stroke-width="2"/></symbol>
<symbol id="ar" viewBox="0 0 24 20"><path d="M0 2h24M8 6h16M0 10h24M6 14h18M0 18h24" stroke="#55555b" stroke-width="2"/></symbol>
<symbol id="up" viewBox="0 0 12 12"><path d="M1 9l5-6 5 6" fill="none" stroke="#5a5a5a" stroke-width="3"/></symbol>
<symbol id="dn" viewBox="0 0 12 12"><path d="M1 3l5 6 5-6" fill="none" stroke="#5a5a5a" stroke-width="3"/></symbol>
<symbol id="lt" viewBox="0 0 12 12"><path d="M9 1L3 6l6 5" fill="none" stroke="#5a5a5a" stroke-width="3"/></symbol>
<symbol id="rt" viewBox="0 0 12 12"><path d="M3 1l6 5-6 5" fill="none" stroke="#5a5a5a" stroke-width="3"/></symbol>
<symbol id="win" viewBox="0 0 26 24"><path d="M4 2h20v16H4z" fill="#fff" stroke="#000" stroke-width="1.500"/><path d="M3 3h22" stroke="#0a0a8c" stroke-width="3"/></symbol>
<symbol id="lens" viewBox="0 0 26 24"><circle cx="7" cy="14" r="5.500" stroke="#111" stroke-width="1.500"/><path d="M5 15l4-4" stroke="#129a9a" stroke-width="2.500"/><path d="M11 18l4 4" stroke="#111" stroke-width="3"/></symbol>
<symbol id="wg" viewBox="0 0 24 26"><path d="M1 4l4 1 3-4 4 5 4-5 3 4 4-1-2 12-9 4-9-4z" fill="#fff" stroke="#222" stroke-width="1.500"/><path d="M8 2v14l4 3 4-3V2M5 5v11M19 5v11" stroke="#222" stroke-width="1.500" fill="none"/><path d="M12 6v13" stroke="#000" stroke-width="4"/><path d="M4 20v5l-3-2.500zM20 20v5l3-2.500z" fill="#1d5ccc"/></symbol>
</defs></svg>

<header class="titlebar d-flex align-items-center">
  <svg width="21" height="21" viewBox="0 0 21 21"><rect x="1" y="1" width="19" height="19" rx="4" fill="#fff" stroke="#7b7b7b" stroke-width="2"/><path d="M3 12.500V9l1-1h1l1 1v3.500M3 11h3M8 8v4.500h2.500V8zM8 10.200h3M13 8v4.500h3V8zM13 10.200h3" stroke="#e3001b" stroke-width="1.600" fill="none"/></svg>
  <span class="ms-2 text-nowrap">Panel Builder 600 - New Volume (D:)\DELL_LOCAL_F_DRIVE\USB Drive\ABB_PROGRAM\21.3.22\NEW_CS_PACK_HMI_22.8.22\new_cs_pack_hmi_22.8.22.jpr</span>
  <div class="ms-auto d-flex">
    <button class="plain wbtn" aria-label="Minimize"><svg width="16" height="16"><path d="M0 8.500h16" stroke="#000"/></svg></button>
    <button class="plain wbtn" aria-label="Restore"><svg width="16" height="16" fill="none" stroke="#000"><path d="M.500 4.500h11v11H.500zM4.500 4V.500h11v11H12"/></svg></button>
    <button class="plain wbtn" aria-label="Close"><svg width="16" height="16"><path d="M.500.500l15 15M15.500.500l-15 15" stroke="#000"/></svg></button>
  </div>
</header>

<nav class="menubar d-flex align-items-center">
  <span class="grip"></span>
  <a href="#">File</a><a href="#">Edit</a><a href="#">Run</a><a href="#">Format</a><a href="#">View</a><a href="#">Window</a><a href="#">Help</a>
</nav>

<div class="strip d-flex align-items-start">
  <div class="tbar d-flex align-items-center ps-2 pe-1">
    <span class="grip me-1"></span>
    <button class="plain" aria-label="New"><svg class="ico"><use href="#new"/></svg></button>
    <button class="plain" aria-label="Open"><svg class="ico"><use href="#open"/></svg></button>
    <button class="plain" aria-label="Save"><svg class="ico"><use href="#save"/></svg></button>
    <button class="plain" aria-label="Save all"><svg class="ico"><use href="#saveall"/></svg></button>
    <i class="vsep"></i>
    <button class="plain" aria-label="Cut"><svg class="ico"><use href="#cut"/></svg></button>
    <button class="plain" aria-label="Copy"><svg class="ico"><use href="#copy"/></svg></button>
    <button class="plain" aria-label="Paste"><svg class="ico"><use href="#paste"/></svg></button>
    <i class="vsep"></i>
    <button class="plain" aria-label="Download"><svg class="ico"><use href="#down"/></svg></button>
    <button class="plain" aria-label="Validate"><svg class="ico"><use href="#ok"/></svg></button>
    <button class="plain" aria-label="USB"><svg class="ico"><use href="#usb"/></svg></button>
    <button class="plain" aria-label="Debug"><svg class="ico"><use href="#bug"/></svg></button>
    <button class="plain" aria-label="Simulate"><svg class="ico"><use href="#play"/></svg></button>
    <button class="plain" aria-label="Stop"><svg class="ico"><use href="#stop"/></svg></button>
    <i class="vsep"></i>
    <button class="plain" aria-label="Grid"><svg class="ico"><use href="#grid9"/></svg></button>
    <button class="plain" aria-label="Snap to grid"><svg class="ico"><use href="#snap"/></svg></button>
    <button class="plain pressed" aria-label="Snap to object"><svg class="ico"><use href="#guide"/></svg></button>
    <i class="vsep"></i>
    <button class="plain" aria-label="Properties"><svg class="ico"><use href="#propsico"/></svg></button>
    <button class="plain" aria-label="Help"><svg class="ico"><use href="#help"/></svg></button>
  </div>
  <div class="cap d-flex align-items-end justify-content-center"><svg width="12" height="12"><use href="#more"/></svg></div>
  <div class="tbar d-flex align-items-center ps-2 pe-1">
    <span class="grip me-1"></span>
    <button class="plain" aria-label="Undo"><svg class="ico"><use href="#undo"/></svg></button>
    <button class="plain" aria-label="Redo"><svg class="ico" viewBox="0 0 24 24"><g transform="matrix(-1 0 0 1 24 0)"><use href="#undo"/></g></svg></button>
  </div>
  <div class="tbar d-flex align-items-center ps-2">
    <span class="grip me-2"></span>
    <label class="visually-hidden" for="lang">Language</label>
    <select id="lang" class="form-select langsel me-1"><option>Lang1</option></select>
  </div>
  <div class="cap d-flex align-items-end justify-content-center"><svg width="12" height="12"><use href="#more"/></svg></div>
</div>

<div class="d-flex grow0">
  <aside class="project d-flex flex-column">
    <div class="phead d-flex align-items-center">ProjectView<button class="plain ms-auto me-2 pe-1" aria-label="Pin"><svg width="14" height="14"><use href="#pin"/></svg></button><button class="plain" aria-label="Close"><svg width="14" height="14"><use href="#x"/></svg></button></div>
    <div class="ptools d-flex">
      <button class="plain" aria-label="Expand"><svg width="22" height="22"><use href="#plus"/></svg></button>
      <button class="plain" aria-label="Collapse"><svg width="22" height="22"><use href="#minus"/></svg></button>
      <button class="plain" aria-label="Sort"><svg class="ico"><use href="#alist"/></svg></button>
      <button class="plain" aria-label="Previous"><svg class="ico"><use href="#cup"/></svg></button>
      <button class="plain" aria-label="Next"><svg class="ico"><use href="#cdn"/></svg></button>
    </div>
    <div class="treebox d-flex grow0">
      <ul class="tree flex-fill d-flex flex-column" id="tree"></ul>
      <div class="vbar d-flex flex-column align-items-center">
        <svg width="12" height="12"><use href="#up"/></svg>
        <div style="flex:176"></div>
        <div class="vthumb w-100 d-flex align-items-center justify-content-center" style="flex:364"><i class="nub"></i></div>
        <div style="flex:252"></div>
        <svg width="12" height="12"><use href="#dn"/></svg>
      </div>
    </div>
  </aside>

  <main class="d-flex flex-column grow0 ms-2">
    <div class="tabs d-flex align-items-end">
      <button class="plain first">46:VFD_SETPOINT<svg width="14" height="14"><use href="#x"/></svg></button>
      <button class="plain w2">44:TIMER_SETTINS</button><button class="plain w3">39:SETTINGS</button><button class="plain amber w4">38:RUNNING_HOURS</button><button class="plain w5">37:PROCESS HALL C-2</button><button class="plain mint w6">12:CONDENSER</button>
      <svg class="ms-auto me-2 mb-2" width="14" height="13" viewBox="0 0 14 13"><path d="M1 2h12" stroke="#0d1a6b" stroke-width="3"/><path d="M2 6h10l-5 6z" fill="#0d1a6b"/></svg>
    </div>
    <div class="frame d-flex flex-column grow0">
      <div class="sheet d-flex flex-column grow0">
        <div class="ebar e1 d-flex align-items-center">
          <button class="plain" aria-label="Zoom in"><svg class="ico"><use href="#z1"/></svg></button>
          <button class="plain" aria-label="Zoom out"><svg class="ico"><use href="#z2"/></svg></button>
          <button class="plain" aria-label="Zoom page"><svg class="ico"><use href="#z3"/></svg></button>
          <button class="plain" aria-label="Zoom selection"><svg class="ico"><use href="#z4"/></svg></button>
          <button class="plain" aria-label="Zoom all"><svg class="ico"><use href="#z5"/></svg></button>
          <button class="plain" aria-label="Pan"><svg class="ico"><use href="#hand"/></svg></button>
          <select class="form-select combo zoomsel" aria-label="Zoom"><option>100%</option></select>
          <i class="esep"></i>
          <button class="plain" aria-label="Delete"><svg width="20" height="20"><use href="#del"/></svg></button>
          <button class="plain" aria-label="Group"><svg width="22" height="22"><use href="#grp"/></svg></button>
          <button class="plain" aria-label="Ungroup"><svg width="22" height="22"><use href="#ungrp"/></svg></button>
          <button class="plain" aria-label="Table"><svg class="ico"><use href="#tbl"/></svg></button>
          <i class="esep"></i>
          <button class="plain" aria-label="Rotate left"><svg class="ico"><use href="#rotl"/></svg></button>
          <button class="plain" aria-label="Rotate right"><svg class="ico" viewBox="0 0 24 24"><g transform="matrix(-1 0 0 1 24 0)"><use href="#rotl"/></g></svg></button>
          <button class="plain" aria-label="Order"><svg width="22" height="22"><use href="#order"/></svg></button>
          <button class="plain caret" aria-label="Order menu"><svg width="11" height="8"><use href="#tri"/></svg></button>
          <button class="plain" aria-label="Bring forward"><svg class="ico"><use href="#lay1"/></svg></button>
          <button class="plain" aria-label="Send backward"><svg class="ico"><use href="#lay2"/></svg></button>
          <div class="objwrap"><select class="form-select combo dim objsel" aria-label="Object"><option>#1 rect4</option></select><svg class="ico"><use href="#pic"/></svg></div>
          <button class="plain" aria-label="Align"><svg class="ico"><use href="#alg"/></svg></button>
          <button class="plain caret" aria-label="Align menu"><svg width="11" height="8"><use href="#tri"/></svg></button>
          <button class="plain" aria-label="Fit"><svg class="ico"><use href="#fit"/></svg></button>
          <button class="plain" aria-label="Distribute"><svg class="ico"><use href="#dist"/></svg></button>
          <button class="plain caret" aria-label="Distribute menu"><svg width="11" height="8"><use href="#tri"/></svg></button>
          <svg class="ms-auto me-1" width="13" height="12"><use href="#chev"/></svg>
        </div>
        <div class="ebar e2 d-flex align-items-center">
          <button class="plain" aria-label="Keypad"><svg class="ico"><use href="#f1"/></svg></button>
          <button class="plain" aria-label="Border"><svg class="ico"><use href="#f2"/></svg></button>
          <button class="plain" aria-label="Fill"><svg class="ico"><use href="#f3"/></svg></button>
          <button class="plain caret" aria-label="Fill menu"><svg width="11" height="8"><use href="#tri"/></svg></button>
          <button class="plain" aria-label="Line"><svg width="20" height="20"><use href="#f4"/></svg></button>
          <button class="plain" aria-label="Info"><svg width="22" height="22"><use href="#f5"/></svg></button>
          <button class="plain" aria-label="Picture"><svg class="ico"><use href="#f6"/></svg></button>
          <button class="plain" aria-label="Style"><svg width="22" height="22"><use href="#f7"/></svg></button>
          <i class="esep"></i>
          <button class="plain me-1" aria-label="Comments"><svg class="ico"><use href="#f8"/></svg></button>
          <label for="fnt" class="flab">Font</label>
          <select id="fnt" class="form-select combo dim fontsel"><option>AIGDT</option></select>
          <button class="plain brkt" aria-label="Spacing"><svg class="ico"><use href="#brk"/></svg></button>
          <select class="form-select combo dim sizesel" aria-label="Font size"><option>8</option></select>
          <button class="plain" aria-label="Font colour"><svg width="24" height="28" viewBox="0 0 24 28"><path d="M6 20L12 3l6 17M8 14h8M3 20h6M15 20h6" stroke="#88888f" stroke-width="2" fill="none"/><path d="M0 23h5v4H0zM7 23h5v4H7zM20 23h4v4h-4z" fill="#99999f"/><path d="M13 23h5v4h-5z" fill="#ccc"/></svg></button>
          <button class="plain caret" aria-label="Colour menu"><svg width="11" height="8"><use href="#tri"/></svg></button>
          <button class="plain serif">B</button>
          <button class="plain serif fst-italic">I</button>
          <button class="plain uline">U</button>
          <button class="plain" aria-label="Left"><svg width="22" height="18"><use href="#al"/></svg></button>
          <button class="plain" aria-label="Centre"><svg width="22" height="18"><use href="#ac"/></svg></button>
          <button class="plain" aria-label="Right"><svg width="22" height="18"><use href="#ar"/></svg></button>
        </div>
        <div class="d-flex grow0">
          <section class="stage grow0">
            <div class="box" id="bTop"></div><div class="box" id="bC1"></div><div class="box" id="bC2"></div><div class="box" id="bC3"></div><div class="box" id="bDelay"></div>
            <div class="tagl title" id="tTitle"><span>VFD SETPONT</span></div>
            <div class="tagl" id="tRead">READ</div><div class="tagl" id="tWrite">WRITE</div>
            <div class="tagl rowlab r1">COMPRESSOR 1 SPEED (RPM)</div><div class="tagl rowlab r2">COMPRESSOR 2 SPEED (RPM)</div><div class="tagl rowlab r3">COMPRESSOR 3 SPEED (RPM)</div>
            <button class="key kd k1">DISABLE</button><button class="key kd k2">DISABLE</button><button class="key kd k3">DISABLE</button>
            <div class="num blk nr n1"><input aria-label="Read 1" value="99999"></div><div class="num nw n1"><input aria-label="Write 1" value="99999"></div>
            <div class="num blk nr n2"><input aria-label="Read 2" value="99999"></div><div class="num nw n2"><input aria-label="Write 2" value="99999"></div>
            <div class="num blk nr n3"><input aria-label="Read 3" value="99999"></div><div class="num nw n3"><input aria-label="Write 3" value="99999"></div>
            <div class="tagl big ct cap1">COMPRESSOR 1</div><div class="tagl big ct cap2">COMPRESSOR 2</div><div class="tagl big ct cap3">COMPRESSOR 3</div>
            <div class="tagl sx s1">SUCTION SP FOR<br>SPEED UP/DOWN</div><div class="tagl sx s2">SUCTION SP FOR<br>SPEED UP/DOWN</div><div class="tagl sx s3">SUCTION SP FOR<br>SPEED UP/DOWN</div>
            <div class="num v1"><input aria-label="Setpoint 1" value="999.00"></div><div class="num v2"><input aria-label="Setpoint 2" value="999.00"></div><div class="num v3"><input aria-label="Setpoint 3" value="999.00"></div>
            <div class="tagl big" id="tDelay">COMMON TIME DELAY</div>
            <div class="tagl dl d1">SPEED UP DELAY</div><div class="tagl dl d2">SPEED DOWN DELAY</div>
            <div class="num dv d1v"><input aria-label="Up delay" value="999.00"></div><div class="num dv d2v"><input aria-label="Down delay" value="999.00"></div>
            <button class="key grey" id="kM">MASTER</button><button class="key grey" id="kS">SLAVE</button>
            <button class="key go" id="kB">BACK</button>
            <button class="key home" id="kH" aria-label="Home"><svg class="mx-auto" width="50" height="55" viewBox="0 0 52 56"><path d="M26 0L52 28l-5 6L26 11 5 34l-5-6z"/><path d="M26 15l18 20v20H31V37H21v18H8V35z"/></svg></button>
          </section>
          <div class="evbar d-flex flex-column align-items-center">
            <svg width="12" height="12"><use href="#up"/></svg>
            <div style="flex:45"></div>
            <div class="vthumb w-100 d-flex align-items-center justify-content-center" style="flex:551"><i class="nub"></i></div>
            <div style="flex:58"></div>
            <svg width="12" height="12"><use href="#dn"/></svg>
          </div>
        </div>
        <div class="ehbar d-flex align-items-center">
          <svg width="12" height="12"><use href="#lt"/></svg>
          <div style="flex:107"></div>
          <div class="vthumb h-100 d-flex align-items-center justify-content-center" style="flex:927"><i class="nub"></i></div>
          <div style="flex:43"></div>
          <svg width="12" height="12"><use href="#rt"/></svg>
        </div>
      </div>
      <div class="drawer d-flex align-items-center"><span>Script / Keyboard</span><button class="plain ms-auto" aria-label="Float"><svg width="14" height="14" fill="none" stroke="#111" stroke-width="1.500"><path d="M4 1h9v8H4zM4 2h9"/><path d="M1 5h9v8H1z" fill="#a09fa2"/><path d="M1 6h9"/></svg></button></div>
      <div class="sheets d-flex">
        <button class="plain t1"><svg viewBox="0 0 76 22" preserveAspectRatio="none"><path d="M0 0l8 19q1 2 4 2h47q4 0 6-3L75 0" fill="#fff" stroke="#333" stroke-width="1.500"/></svg>Script</button>
        <button class="plain t2"><svg viewBox="0 0 104 22" preserveAspectRatio="none"><path d="M0 0l9 18q1 2 4 2h75q4 0 6-3l8-15" fill="none" stroke="#333" stroke-width="1.500"/></svg>Keyboard</button>
      </div>
    </div>
  </main>

  <aside class="props d-flex flex-column">
    <div class="phead d-flex align-items-center">Properties<button class="plain ms-auto me-2" aria-label="Pin"><svg width="14" height="14"><use href="#pin"/></svg></button><button class="plain ms-1" aria-label="Close"><svg width="14" height="14"><use href="#x"/></svg></button></div>
    <div class="qtools d-flex align-items-center">
      <button class="plain" aria-label="All"><svg width="26" height="24"><use href="#win"/><use href="#lens" fill="#ddd"/></svg></button>
      <button class="plain" aria-label="Expand all"><svg width="26" height="24"><use href="#win"/><path d="M16 4v14M10 11h13" stroke="#00f" stroke-width="3"/><use href="#lens" fill="#f4e400"/></svg></button>
      <button class="plain" aria-label="Collapse all"><svg width="26" height="24"><use href="#win"/><path d="M12 10h9" stroke="#00f" stroke-width="3"/><use href="#lens" fill="#f4e400"/></svg></button>
    </div>
    <div class="grid grow0 d-flex bg-white">
      <div class="gut d-flex flex-column align-items-center">
        <svg width="13" height="13" viewBox="0 0 13 13"><path d="M.500.500h12v12H.500z" fill="#fff" stroke="#777"/><path d="M3 6.500h7" stroke="#000"/></svg>
        <svg width="13" height="13" viewBox="0 0 13 13"><path d="M.500.500h12v12H.500z" fill="#fff" stroke="#777"/><path d="M3 6.500h7M6.500 3v7" stroke="#000"/></svg>
      </div>
      <div class="grow0">
        <div class="gcell gtitle">Page : VFD_SETPOINT</div>
        <div class="grows d-flex flex-column">
          <div class="gcell"><div class="gk">Width</div><div class="gv">800</div></div>
          <div class="gcell"><div class="gk">Height</div><div class="gv">480</div></div>
          <div class="gcell"><div class="gk">Fit to Screen Size</div><div class="gv">Fit to Screen</div></div>
          <div class="gcell"><div class="gk">Background</div><div class="gv"><i class="swatch"></i><span class="ps-2 ms-1 overflow-hidden grow0">[64, 224, 208]</span><button class="gbtn">a</button><button class="gbtn me-1">+</button></div></div>
          <div class="gcell"><div class="gk">Template</div><div class="gv">none</div></div>
          <div class="gcell"><div class="gk">Events</div><div class="gv"></div></div>
        </div>
      </div>
    </div>
    <div class="desc"></div>
  </aside>
  <aside class="rail"><button class="plain"><svg width="24" height="26"><use href="#wg"/></svg><span>Widget Gallery</span></button></aside>
</div>

<footer class="status d-flex align-items-center">
  <span class="flex-fill">Ready</span><span class="sa"></span><span></span><span></span><span></span><span></span><span class="sb"></span><span class="sc">CAP</span><span class="sd">NUM</span><span class="sd">SCRL</span>
</footer>
<div class="dock"><button class="plain">ProjectValidator</button></div>

<script src="https://cdn.jsdelivr.net/npm/bootstrap@5.3.0/dist/js/bootstrap.bundle.min.js"></script>
<script>
const pages = ["CONDENSER","CS_1_C_1_TIMER","CS_1_C_2_TIMER","CS_2_C_1_TIMER","CS_2_C_2_TIMER","CS_3_C_1_TIMER","CS_3_C_2_TIMER","CS_TIMER","CS-1 C-1","CS-1 C-2","CS-1 COMPRESSOR","CS-2 C-1","CS-2 C-2","CS-2 COMPRESSOR","CS-3 C-1","CS-3 C-2","FREZZING PAGE","HOME","PACKING ROOM","PACKING_ROOM...","PRE PROCESS HA...","PRE PROCESS HA...","PROCESS HALL C-3","PRESSURE_SETTI...","PROCESS HALL C-1","PROCESS HALL C-2","RUNNING_HOURS","SETTINGS","STATUS","TEMP","TEMP_1","TEMPERATURE_S...","TIMER_SETTINS","WELCOME","VFD_SETPOINT","COMP_SELECTION","CS_1_C_1"];
document.getElementById("tree").innerHTML = pages.map((name, i) => {
  const no = i + 12, icon = no === 29 ? "home" : no === 46 ? "page-b" : "page";
  return `<li class="d-flex align-items-center text-nowrap${no === 46 ? " cur" : ""}"><svg width="24" height="20"><use href="#${icon}"/></svg><span>${no} : ${name}</span></li>`;
}).join("");
</script>
</body>
</html>
